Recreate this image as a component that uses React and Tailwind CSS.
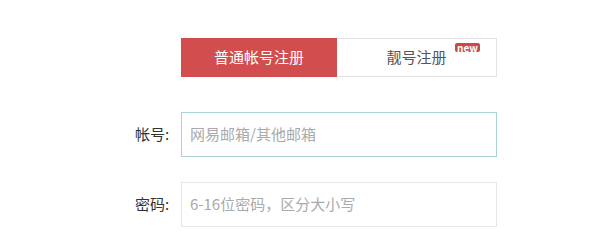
export default function App() {
  return (
    <div
      className="w-[600px] h-[246px] bg-white overflow-hidden"
      style={{ fontFamily: '"Noto Sans CJK SC", "Noto Sans", sans-serif' }}
    >
      {/* TABS */}
      <div className="flex ml-[181px] mt-[38px] w-[316px] h-[39px]">
        <div className="w-[156px] h-full bg-[#d14d4e] text-white text-[15px] flex items-center justify-center">
          普通帐号注册
        </div>
        <div className="relative flex-1 h-full border border-l-0 border-[#e3e3e3] text-[#555] text-[15px] flex items-center justify-center">
          靓号注册
          <span className="absolute left-[118px] top-[4px] h-[9px] w-[25px] rounded-[2px] bg-[#c9494d] text-white text-[10px] leading-[9px] font-bold text-center">
            new
          </span>
        </div>
      </div>

      {/* ACCOUNT */}
      <div className="flex items-center mt-[35px]">
        <label className="w-[135px] shrink-0" />
        <span className="w-[46px] shrink-0 text-[15px] text-[#333]">帐号:</span>
        <div className="w-[316px] h-[45px] border border-[#a7d3d8] flex items-center px-[8px] text-[15px] text-[#aaa]">
          网易邮箱/其他邮箱
        </div>
      </div>

      {/* PASSWORD */}
      <div className="flex items-center mt-[25px]">
        <label className="w-[135px] shrink-0" />
        <span className="w-[46px] shrink-0 text-[15px] text-[#333]">密码:</span>
        <div className="w-[316px] h-[45px] border border-[#e6e6e6] flex items-center px-[8px] text-[15px] text-[#aaa]">
          6-16位密码，区分大小写
        </div>
      </div>
    </div>
  );
}
